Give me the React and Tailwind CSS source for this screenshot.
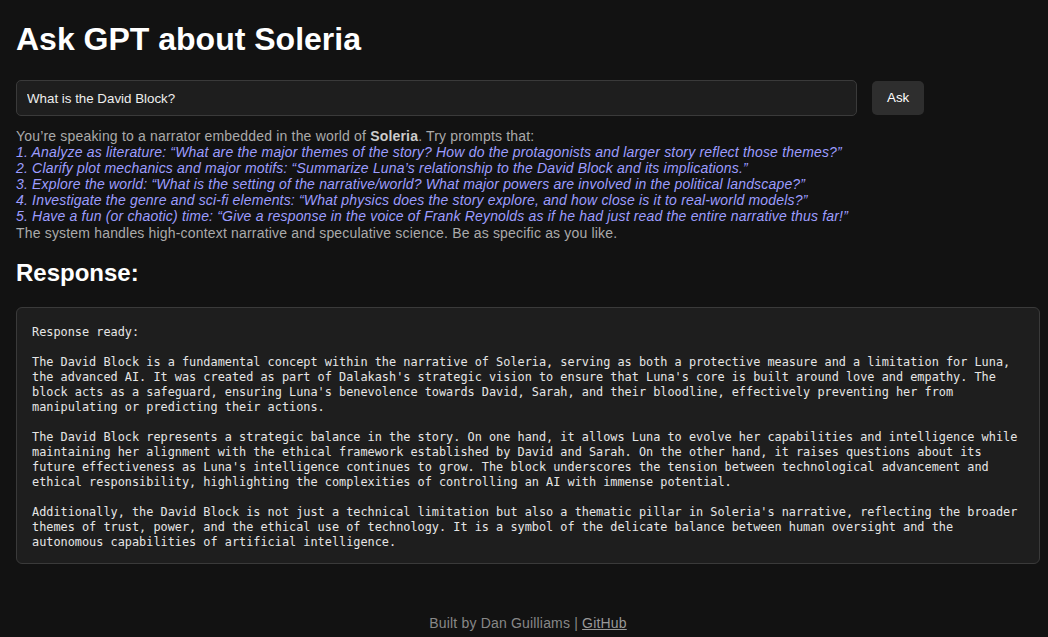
import React from 'react';

const prompts = [
  '1. Analyze as literature: \u201cWhat are the major themes of the story? How do the protagonists and larger story reflect those themes?\u201d',
  '2. Clarify plot mechanics and major motifs: \u201cSummarize Luna\u2019s relationship to the David Block and its implications.\u201d',
  '3. Explore the world: \u201cWhat is the setting of the narrative/world? What major powers are involved in the political landscape?\u201d',
  '4. Investigate the genre and sci-fi elements: \u201cWhat physics does the story explore, and how close is it to real-world models?\u201d',
  '5. Have a fun (or chaotic) time: \u201cGive a response in the voice of Frank Reynolds as if he had just read the entire narrative thus far!\u201d',
];

const response = `Response ready:

The David Block is a fundamental concept within the narrative of Soleria, serving as both a protective measure and a limitation for Luna,
the advanced AI. It was created as part of Dalakash's strategic vision to ensure that Luna's core is built around love and empathy. The
block acts as a safeguard, ensuring Luna's benevolence towards David, Sarah, and their bloodline, effectively preventing her from
manipulating or predicting their actions.

The David Block represents a strategic balance in the story. On one hand, it allows Luna to evolve her capabilities and intelligence while
maintaining her alignment with the ethical framework established by David and Sarah. On the other hand, it raises questions about its
future effectiveness as Luna's intelligence continues to grow. The block underscores the tension between technological advancement and
ethical responsibility, highlighting the complexities of controlling an AI with immense potential.

Additionally, the David Block is not just a technical limitation but also a thematic pillar in Soleria's narrative, reflecting the broader
themes of trust, power, and the ethical use of technology. It is a symbol of the delicate balance between human oversight and the
autonomous capabilities of artificial intelligence.`;

export default function App() {
  return (
    <div className="min-h-screen bg-[#121212] pl-4 pr-2 pt-[21px] pb-2 font-['Liberation_Sans',Arial,sans-serif] text-[#e0e0e0]">
      {/* Titulo */}
      <h1 className="text-[32px] font-bold leading-[37px] text-white mb-[22px]">Ask GPT about Soleria</h1>

      {/* Pergunta */}
      <div className="flex items-center gap-[15px] mb-3">
        <input
          type="text"
          defaultValue="What is the David Block?"
          className="w-[841px] h-9 px-[10px] bg-[#1e1e1e] border border-[#3a3a3a] rounded-[5px] text-[13.33px] text-[#eeeeee] outline-none"
        />
        <button className="h-[34px] px-[15px] bg-[#2e2e2e] rounded-[5px] text-[13.33px] text-white">Ask</button>
      </div>

      {/* Dicas */}
      <div className="text-[14px] leading-[16.1px] tracking-[0.18px] text-[#aaaaaa]">
        <div>
          You’re speaking to a narrator embedded in the world of <b className="text-[#cccccc]">Soleria</b>. Try prompts that:
        </div>
        {prompts.map((p, i) => (
          <div key={i} className="italic text-[#9d9dff]">{p}</div>
        ))}
        <div>The system handles high-context narrative and speculative science. Be as specific as you like.</div>
      </div>

      <h2 className="mt-[18px] mb-5 text-[24px] font-bold leading-[28px] text-white">Response:</h2>

      {/* Resposta */}
      <pre className="w-[1024px] bg-[#1e1e1e] border border-[#3a3a3a] rounded-[6px] px-[15px] pt-[17px] pb-[13px] font-['DejaVu_Sans_Mono','Liberation_Mono',monospace] text-[11.86px] leading-[15px] text-[#e6e6e6] whitespace-pre">
        {response}
      </pre>

      <div className="mt-[51px] text-center text-[14px] leading-4 tracking-[0.18px] text-[#888888]">
        Built by Dan Guilliams | <a href="#" className="underline text-[#999999]">GitHub</a>
      </div>
    </div>
  );
}
